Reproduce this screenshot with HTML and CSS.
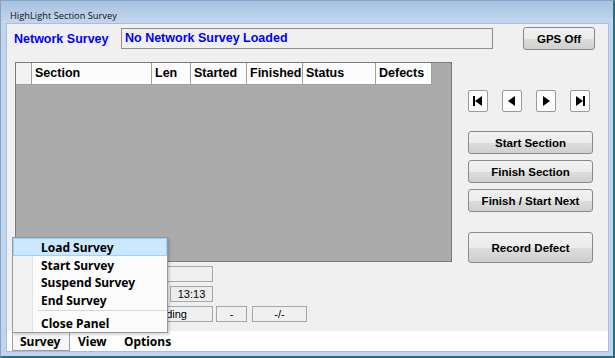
FILE: index.html
```html
<!DOCTYPE html>
<html lang="en">
  <head>
    <meta charset="UTF-8" />
    <title>HighLight Section Survey</title>
    <link rel="stylesheet" href="styles.css">
  </head>
  <body>
    <div class="window">
      <div class="titlebar">HighLight Section Survey</div>

      <div class="client">
        <div class="panel">
          <div class="toprow">
            <span class="net-label">Network Survey</span>
            <div class="net-box">No Network Survey Loaded</div>
            <button class="btn gps">GPS Off</button>
          </div>

          <div class="body">
            <div class="left">
              <div class="grid">
                <div class="grid-head">
                  <div class="cell rowhead"></div>
                  <div class="cell c-section">Section</div>
                  <div class="cell c-len">Len</div>
                  <div class="cell c-started">Started</div>
                  <div class="cell c-finished">Finished</div>
                  <div class="cell c-status">Status</div>
                  <div class="cell c-defects">Defects</div>
                </div>
              </div>

              <div class="status">
                <div class="srow">
                  <div class="box b-wide"></div>
                </div>
                <div class="srow">
                  <span class="slabel">Time</span>
                  <div class="box b-time">13:13</div>
                </div>
                <div class="srow">
                  <div class="box b-head">Heading</div>
                  <div class="box b-dash">-</div>
                  <div class="box b-frac">-/-</div>
                </div>
              </div>
            </div>

            <div class="right">
              <div class="nav">
                <button class="btn navbtn" title="First">
                  <svg width="10" height="10" viewBox="0 0 10 10"><rect x="0" y="0" width="2" height="10"/><polygon points="2,5 9,0 9,10"/></svg>
                </button>
                <button class="btn navbtn" title="Previous">
                  <svg width="10" height="10" viewBox="0 0 10 10"><polygon points="1,5 8,0 8,10"/></svg>
                </button>
                <button class="btn navbtn" title="Next">
                  <svg width="10" height="10" viewBox="0 0 10 10"><polygon points="2,0 9,5 2,10"/></svg>
                </button>
                <button class="btn navbtn" title="Last">
                  <svg width="10" height="10" viewBox="0 0 10 10"><polygon points="1,0 8,5 1,10"/><rect x="8" y="0" width="2" height="10"/></svg>
                </button>
              </div>
              <button class="btn act first">Start Section</button>
              <button class="btn act">Finish Section</button>
              <button class="btn act">Finish / Start Next</button>
              <button class="btn act record">Record Defect</button>
            </div>
          </div>
        </div>

        <div class="menubar">
          <span class="mitem open">Survey</span>
          <span class="mitem m-view">View</span>
          <span class="mitem">Options</span>
        </div>

        <div class="popup">
          <div class="pitem hot">Load Survey</div>
          <div class="pitem">Start Survey</div>
          <div class="pitem">Suspend Survey</div>
          <div class="pitem">End Survey</div>
          <div class="psep"></div>
          <div class="pitem">Close Panel</div>
        </div>
      </div>
    </div>
  </body>
</html>
```

FILE: styles.css
```css
* {
  margin: 0;
  padding: 0;
  box-sizing: border-box;
}

body {
  width: 615px;
  height: 358px;
  overflow: hidden;
  font-family: "Liberation Sans", Arial, sans-serif;
  background: #c0d5ed;
}

.window {
  display: flex;
  flex-direction: column;
  width: 615px;
  height: 358px;
  background: #c0d5ed;
  border-left: 1px solid #8aa4c0;
  border-top: 1px solid #8aa4c0;
  border-right: 2px solid #2a6e7c;
  border-bottom: 2px solid #2a6e7c;
  padding: 0 4px 4px 5px;
}

.titlebar {
  flex: none;
  height: 22px;
  margin: 0 -4px 0 -5px;
  padding: 8px 0 0 9px;
  font: 9.3px/13px "Open Sans", sans-serif;
  color: #111;
  background: linear-gradient(#a6c2e1, #c3d7ee);
}

.client {
  position: relative;
  flex: 1;
  display: flex;
  flex-direction: column;
  border: 1px solid #a9bfd9;
  background: #f0f0f0;
}

.panel {
  flex: 1;
  padding-top: 3px;
}

/* top row */
.toprow {
  display: flex;
  align-items: center;
  height: 23px;
  padding-left: 7px;
}

.net-label {
  width: 107px;
  font-size: 12.5px;
  font-weight: bold;
  color: #0000ff;
}

.net-box {
  width: 372px;
  height: 21px;
  margin-right: 30px;
  padding-left: 3px;
  border: 1px solid #8f8f8f;
  font-size: 12.5px;
  line-height: 19px;
  font-weight: bold;
  color: #0000ff;
}

.btn {
  display: flex;
  align-items: center;
  justify-content: center;
  border: 1px solid #8a8a8a;
  border-radius: 3px;
  background: linear-gradient(#f2f2f2 0%, #ebebeb 50%, #dddddd 51%, #cfcfcf 100%);
  font-family: "Liberation Sans", Arial, sans-serif;
  font-size: 11.5px;
  font-weight: bold;
  color: #000;
}

.gps {
  width: 72px;
  height: 23px;
}

/* grid + right column */
.body {
  display: flex;
  margin-top: 12px;
  padding-left: 8px;
}

.left {
  width: 437px;
}

.grid {
  height: 200px;
  border: 1px solid #7a7a7a;
  background: #ababab;
}

.grid-head {
  display: flex;
  height: 22px;
}

.cell {
  height: 22px;
  padding-left: 3px;
  border-right: 1px solid #a0a0a0;
  border-bottom: 1px solid #a0a0a0;
  background: #fcfcfc;
  font-size: 12.5px;
  font-weight: bold;
  line-height: 21px;
  color: #000;
}

.rowhead { width: 16px; background: #f2f2f2; }
.c-section { width: 120px; }
.c-len { width: 39px; }
.c-started { width: 56px; }
.c-finished { width: 56px; }
.c-status { width: 73px; }
.c-defects { width: 56px; }

.status {
  display: flex;
  flex-direction: column;
  gap: 4px;
  margin-top: 4px;
}

.srow {
  display: flex;
  align-items: center;
  height: 16px;
}

.box {
  height: 16px;
  border: 1px solid #a7a7a7;
  background: #f0f0f0;
  font-size: 11px;
  line-height: 14px;
  text-align: center;
  color: #000;
}

.b-wide { width: 106px; margin-left: 92px; }
.slabel { width: 155px; font-size: 11px; }
.b-time { width: 43px; background: #ececec; }
.b-head { width: 73px; margin-left: 125px; padding-right: 25px; text-align: right; }
.b-dash { width: 31px; margin-left: 3px; }
.b-frac { width: 55px; margin-left: 5px; }

.right {
  display: flex;
  flex-direction: column;
  width: 125px;
  margin-left: 16px;
  padding-top: 28px;
}

.nav {
  display: flex;
  justify-content: space-between;
  width: 122px;
  height: 22px;
}

.navbtn {
  width: 20px;
  height: 22px;
  border-radius: 2px;
  background: #fcfcfc;
  border-color: #9a9a9a;
}

.navbtn svg {
  fill: #000;
}

.act {
  width: 125px;
  height: 23px;
  margin-top: 6px;
}

.act.first {
  margin-top: 19px;
}

.act.record {
  height: 31px;
  margin-top: 20px;
}

/* menu */
.menubar {
  display: flex;
  align-items: center;
  height: 20px;
  padding-left: 5px;
  background: #fff;
}

.mitem {
  height: 19px;
  padding: 0 7px;
  font: bold 12px/17px "Noto Sans", sans-serif;
  color: #000;
  border: 1px solid transparent;
}

.mitem.open {
  width: 58px;
  border-color: #9b9b9b;
  border-top-color: transparent;
  background: #f7f7f7;
}

.m-view {
  width: 46px;
}

.popup {
  position: absolute;
  left: 5px;
  top: 213px;
  width: 156px;
  padding: 0;
  border: 1px solid #979797;
  background: linear-gradient(to right, #f1f1f1 0 19px, #e3e3e3 19px 20px, #fbfbfb 20px);
  box-shadow: 2px 2px 2px rgba(0, 0, 0, 0.15);
}

.pitem {
  height: 17.5px;
  padding-left: 27px;
  font: bold 12px/17px "Noto Sans", sans-serif;
  color: #000;
  border: 1px solid transparent;
}

.pitem.hot {
  background: #cce8ff;
  border-color: #99d1ff;
}

.psep {
  height: 6px;
  margin-left: 25px;
  border-top: 2px solid #fbfbfb;
  border-bottom: 3px solid #fbfbfb;
  background: #d7d7d7;
}
```
